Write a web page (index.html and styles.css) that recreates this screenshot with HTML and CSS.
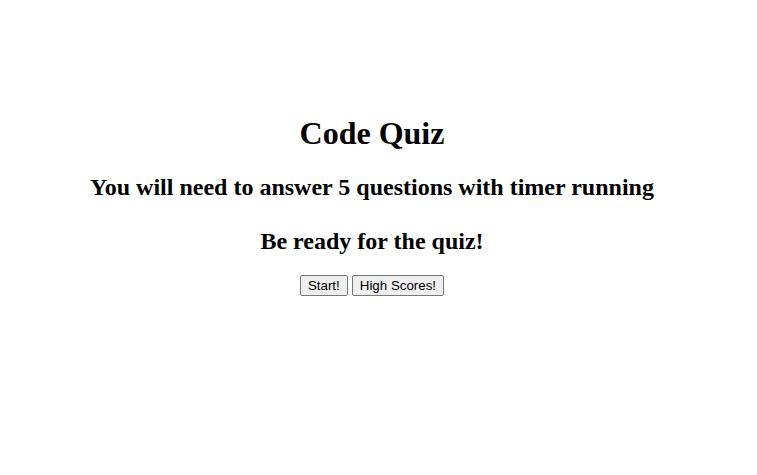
FILE: index.html
```html
<!DOCTYPE html>
<html lang="en">
<head>
<meta charset="utf-8">
<title>Code Quiz</title>
<link rel="stylesheet" href="styles.css">
</head>
<body>
<main class="intro">
  <h1 class="title">Code Quiz</h1>
  <h2 class="subtitle subtitle-first">You will need to answer 5 questions with timer running</h2>
  <h2 class="subtitle">Be ready for the quiz!</h2>
  <div class="actions">
    <button class="btn" type="button">Start!</button>
    <button class="btn" type="button">High Scores!</button>
  </div>
</main>
</body>
</html>
```

FILE: styles.css
```css
body {
  margin: 8px 21px 8px 8px;
  font-family: "Liberation Serif", "Times New Roman", serif;
  background: #fff;
  color: #000;
}
.intro {
  padding-top: 86px;
  text-align: center;
}
.title {
  font-size: 32px;
  font-weight: bold;
  margin: 21px 0 22px;
}
.subtitle {
  font-size: 24px;
  font-weight: bold;
  margin: 20px 0;
}
.subtitle-first {
  margin-bottom: 27px;
}
.actions {
  margin-top: 0;
}
.btn {
  font-family: "Liberation Sans", Arial, sans-serif;
  font-size: 13.333px;
  padding: 2px 7px;
  background: #efefef;
  border: 1px solid #767676;
  border-radius: 2px;
  color: #000;
}
```
